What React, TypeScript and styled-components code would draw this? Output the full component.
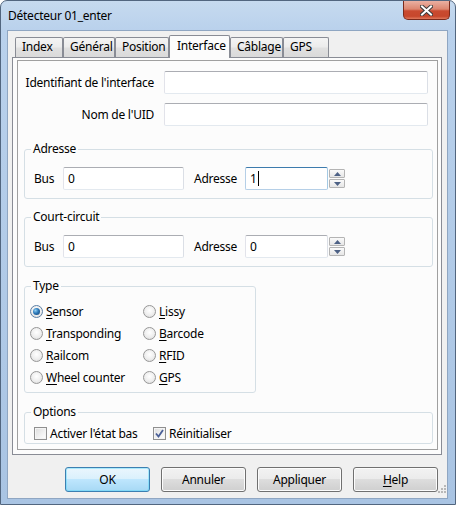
import React from 'react';
import styled, { createGlobalStyle } from 'styled-components';

const GlobalStyle = createGlobalStyle`
  html, body {
    margin: 0;
    padding: 0;
    background: #ffffff;
  }
  body {
    font-family: "Noto Sans", "Open Sans", sans-serif;
    font-size: 12px;
    letter-spacing: -0.25px;
    color: #000000;
  }
`;

// Window chrome
const Window = styled.div`
  width: 456px;
  height: 505px;
  box-sizing: border-box;
  display: flex;
  flex-direction: column;
  border: 1px solid #52667f;
  border-radius: 7px 7px 0 0;
  background: linear-gradient(180deg, #c6daef 0px, #b9d1ec 30px, #a9c4e3 100%);
  overflow: hidden;
`;

const TitleBar = styled.div`
  height: 29px;
  display: flex;
  align-items: center;
  padding-left: 7px;
`;

const Title = styled.span`
  flex: 1;
  line-height: 16px;
  margin-top: 1px;
`;

const CloseButton = styled.div`
  align-self: flex-start;
  width: 47px;
  height: 19px;
  margin-right: 5px;
  box-sizing: border-box;
  border: 1px solid #7a2a1c;
  border-top: none;
  border-radius: 0 0 5px 5px;
  background: linear-gradient(180deg, #eab0a2 0%, #dc8670 45%, #c94a30 55%, #c7472c 85%, #e07a5e 100%);
  display: flex;
  align-items: center;
  justify-content: center;
`;

const Client = styled.div`
  position: relative;
  flex: 1;
  margin: 0 7px 5px 6px;
  border: 1px solid #8fa6c2;
  background: #f0f0f0;
  display: flex;
  flex-direction: column;
`;

// Tabs
const TabStrip = styled.div`
  position: relative;
  z-index: 1;
  display: flex;
  align-items: flex-end;
  height: 22px;
  margin: 4px 0 0 7px;
`;

const Tab = styled.div<{ $width: number; $active?: boolean }>`
  width: ${p => p.$width}px;
  height: ${p => (p.$active ? 23 : 20)}px;
  margin-bottom: ${p => (p.$active ? -1 : 0)}px;
  box-sizing: border-box;
  border: 1px solid #898c95;
  border-bottom: none;
  border-radius: 2px 2px 0 0;
  padding: ${p => (p.$active ? '2px 0 0 7px' : '1px 0 0 6px')};
  line-height: 16px;
  white-space: nowrap;
  background: ${p =>
    p.$active
      ? '#fcfcfc'
      : 'linear-gradient(180deg, #f4f4f4 0%, #ececec 45%, #e0e0e0 55%, #dadada 100%)'};
`;

const TabPanel = styled.div`
  width: 430px;
  height: 398px;
  margin-left: 4px;
  box-sizing: border-box;
  border: 1px solid #898c95;
  padding: 2px 3px 4px 4px;
  background: #fcfcfc;
`;

const InnerBox = styled.div`
  height: 100%;
  box-sizing: border-box;
  border: 1px solid #a0a0a0;
  background: #fcfcfc;
  display: flex;
  flex-direction: column;
`;

// Form parts
const FormGrid = styled.div`
  display: grid;
  grid-template-columns: 136px 264px;
  grid-auto-rows: 23px;
  column-gap: 10px;
  row-gap: 9px;
  margin-top: 10px;
`;

const FieldLabel = styled.span<{ $width?: number; $gap?: number }>`
  align-self: center;
  justify-self: end;
  white-space: nowrap;
  ${p => (p.$width ? `width: ${p.$width}px; flex: none;` : '')}
  ${p => (p.$gap ? `margin-left: ${p.$gap}px;` : '')}
`;

const TextBox = styled.div<{ $width: number; $focused?: boolean }>`
  width: ${p => p.$width}px;
  height: 23px;
  flex: none;
  box-sizing: border-box;
  border: 1px solid;
  border-color: ${p =>
    p.$focused ? '#3d7bad #a4c9e3 #b5cfe7 #b5cfe7' : '#abadb3 #dbdfe6 #e3e9ef #e2e3ea'};
  border-radius: 2px;
  background: #ffffff;
  padding: 0 4px;
  display: flex;
  align-items: center;
  line-height: 16px;
`;

const Caret = styled.span`
  display: inline-block;
  width: 1px;
  height: 15px;
  margin-left: 1px;
  background: #000000;
`;

const GroupBox = styled.fieldset<{ $top: number; $pt: number; $pb: number; $width?: number }>`
  margin: ${p => p.$top}px 4px 0 6px;
  ${p => (p.$width ? `width: ${p.$width}px;` : '')}
  padding: ${p => p.$pt}px 6px ${p => p.$pb}px 6px;
  min-width: 0;
  box-sizing: border-box;
  border: 1px solid #d5dfe5;
  border-radius: 3px;
`;

const Legend = styled.legend`
  padding: 0 2px;
  line-height: 16px;
  font-size: 12px;
`;

const AddressRow = styled.div`
  display: flex;
  align-items: center;
  margin-left: 3px;
`;

const Spin = styled.div`
  display: flex;
  flex-direction: column;
  gap: 1px;
  margin-left: 1px;
`;

const SpinButton = styled.div`
  width: 16px;
  height: 9px;
  box-sizing: border-box;
  border: 1px solid #b4b4b4;
  border-radius: 1px;
  background: linear-gradient(180deg, #fafafa 0%, #e6e6e6 100%);
  display: flex;
  align-items: center;
  justify-content: center;
`;

const RadioGrid = styled.div`
  display: grid;
  grid-template-columns: 113px auto;
  grid-auto-rows: 22px;
  margin-left: -1px;
`;

const Choice = styled.label`
  display: flex;
  align-items: center;
  gap: 3px;
  white-space: nowrap;
`;

const RadioDot = styled.span<{ $checked?: boolean }>`
  position: relative;
  width: 13px;
  height: 13px;
  flex: none;
  box-sizing: border-box;
  border-radius: 50%;
  border: 1px solid ${p => (p.$checked ? '#5b7fa6' : '#979797')};
  background: radial-gradient(circle at 50% 40%, #ffffff 0%, #eeeeee 55%, #d6d6d6 100%);

  &::after {
    content: '';
    display: ${p => (p.$checked ? 'block' : 'none')};
    position: absolute;
    left: 2px;
    top: 2px;
    width: 7px;
    height: 7px;
    border-radius: 50%;
    background: radial-gradient(circle at 35% 35%, #8fd0f5 0%, #2c78b8 45%, #153e6e 100%);
  }
`;

const Mnemonic = styled.u`
  text-decoration: underline;
  text-underline-offset: 2px;
`;

const OptionRow = styled.div`
  display: grid;
  grid-template-columns: 119px auto;
  height: 18px;
  align-items: center;
  margin-left: 3px;
`;

const CheckBox = styled.span`
  width: 13px;
  height: 13px;
  flex: none;
  box-sizing: border-box;
  border: 1px solid #8f8f8f;
  background: linear-gradient(135deg, #dcdcdc 0%, #f2f2f2 60%, #ffffff 100%);
  box-shadow: inset 0 0 0 1px #f4f4f4;
  display: flex;
  align-items: center;
  justify-content: center;
`;

// Buttons
const ButtonRow = styled.div`
  display: flex;
  justify-content: flex-end;
  gap: 11px;
  margin-top: 12px;
  padding-right: 9px;
`;

const DialogButton = styled.div<{ $default?: boolean }>`
  width: 85px;
  height: 25px;
  box-sizing: border-box;
  border: 1px solid ${p => (p.$default ? '#3c7fb1' : '#707070')};
  border-radius: 3px;
  display: flex;
  align-items: center;
  justify-content: center;
  line-height: 16px;
  box-shadow: inset 0 0 0 1px ${p => (p.$default ? '#48d8fb66' : '#fcfcfc')};
  background: ${p =>
    p.$default
      ? 'linear-gradient(180deg, #eaf6fd 0%, #d9f0fc 50%, #bee6fd 50%, #a7d9f5 100%)'
      : 'linear-gradient(180deg, #f2f2f2 0%, #ebebeb 50%, #dddddd 50%, #cfcfcf 100%)'};
`;

const SizeGrip = styled.svg`
  position: absolute;
  right: 1px;
  bottom: 3px;
`;

const tabs = [
  { label: 'Index', width: 48 },
  { label: 'Général', width: 52 },
  { label: 'Position', width: 54 },
  { label: 'Interface', width: 61, active: true },
  { label: 'Câblage', width: 53 },
  { label: 'GPS', width: 46 },
];

const types: { first: string; rest: string; checked?: boolean }[] = [
  { first: 'S', rest: 'ensor', checked: true },
  { first: 'L', rest: 'issy' },
  { first: 'T', rest: 'ransponding' },
  { first: 'B', rest: 'arcode' },
  { first: 'R', rest: 'ailcom' },
  { first: 'R', rest: 'FID' },
  { first: 'W', rest: 'heel counter' },
  { first: 'G', rest: 'PS' },
];

const UpArrow = () => (
  <svg width="7" height="4" viewBox="0 0 7 4">
    <path d="M0 4 L3.5 0 L7 4 Z" fill="#4d6185" />
  </svg>
);

const DownArrow = () => (
  <svg width="7" height="4" viewBox="0 0 7 4">
    <path d="M0 0 L3.5 4 L7 0 Z" fill="#4d6185" />
  </svg>
);

const AddressFields = ({ bus, address, focused }: { bus: string; address: string; focused?: boolean }) => (
  <AddressRow>
    <FieldLabel $width={29}>Bus</FieldLabel>
    <TextBox $width={121}>{bus}</TextBox>
    <FieldLabel $width={51} $gap={10}>Adresse</FieldLabel>
    <TextBox $width={83} $focused={focused}>
      {address}
      {focused && <Caret />}
    </TextBox>
    <Spin>
      <SpinButton><UpArrow /></SpinButton>
      <SpinButton><DownArrow /></SpinButton>
    </Spin>
  </AddressRow>
);

const App = () => {
  return (
    <>
      <GlobalStyle />
      <Window>
        <TitleBar>
          <Title>Détecteur 01_enter</Title>
          <CloseButton>
            <svg width="13" height="11" viewBox="0 0 13 11">
              <path d="M2 1.5 L11 9.5 M11 1.5 L2 9.5" stroke="#3b3b3b" strokeWidth="4" strokeLinecap="square" />
              <path d="M2 1.5 L11 9.5 M11 1.5 L2 9.5" stroke="#ffffff" strokeWidth="2" strokeLinecap="square" />
            </svg>
          </CloseButton>
        </TitleBar>

        <Client>
          <TabStrip>
            {tabs.map(t => (
              <Tab key={t.label} $width={t.width} $active={t.active}>
                {t.label}
              </Tab>
            ))}
          </TabStrip>

          <TabPanel>
            <InnerBox>
              <FormGrid>
                <FieldLabel>Identifiant de l'interface</FieldLabel>
                <TextBox $width={264} />
                <FieldLabel>Nom de l'UID</FieldLabel>
                <TextBox $width={264} />
              </FormGrid>

              <GroupBox $top={15} $pt={10} $pb={8}>
                <Legend>Adresse</Legend>
                <AddressFields bus="0" address="1" focused />
              </GroupBox>

              <GroupBox $top={10} $pt={10} $pb={8}>
                <Legend>Court-circuit</Legend>
                <AddressFields bus="0" address="0" />
              </GroupBox>

              <GroupBox $top={11} $pt={6} $pb={4} $width={232}>
                <Legend>Type</Legend>
                <RadioGrid>
                  {types.map((t, i) => (
                    <Choice key={i}>
                      <RadioDot $checked={t.checked} />
                      <span>
                        <Mnemonic>{t.first}</Mnemonic>
                        {t.rest}
                      </span>
                    </Choice>
                  ))}
                </RadioGrid>
              </GroupBox>

              <GroupBox $top={11} $pt={4} $pb={1}>
                <Legend>Options</Legend>
                <OptionRow>
                  <Choice>
                    <CheckBox />
                    <span>Activer l'état bas</span>
                  </Choice>
                  <Choice>
                    <CheckBox>
                      <svg width="9" height="9" viewBox="0 0 9 9">
                        <path d="M1 4.5 L3.5 7.5 L8 1" stroke="#4a5f97" strokeWidth="1.8" fill="none" />
                      </svg>
                    </CheckBox>
                    <span>Réinitialiser</span>
                  </Choice>
                </OptionRow>
              </GroupBox>
            </InnerBox>
          </TabPanel>

          <ButtonRow>
            <DialogButton $default>OK</DialogButton>
            <DialogButton>Annuler</DialogButton>
            <DialogButton>Appliquer</DialogButton>
            <DialogButton>
              <span>
                <Mnemonic>H</Mnemonic>elp
              </span>
            </DialogButton>
          </ButtonRow>

          <SizeGrip width="10" height="10" viewBox="0 0 10 10">
            <g fill="#b8b8b8">
              <rect x="8" y="0" width="2" height="2" />
              <rect x="5" y="3" width="2" height="2" />
              <rect x="8" y="3" width="2" height="2" />
              <rect x="2" y="6" width="2" height="2" />
              <rect x="5" y="6" width="2" height="2" />
              <rect x="8" y="6" width="2" height="2" />
            </g>
          </SizeGrip>
        </Client>
      </Window>
    </>
  );
};

export default App;
